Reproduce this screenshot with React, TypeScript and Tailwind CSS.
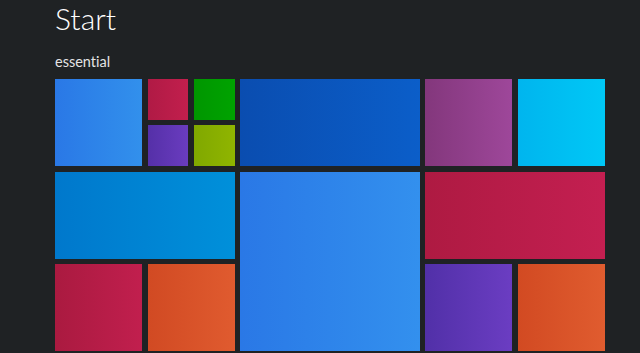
import React from "react";

type Tile = {
  pos: string;
  from: string;
  to: string;
};

// grid: 12 columns x 6 rows, each unit ~40.7px
const tiles: Tile[] = [
  { pos: "col-start-1 col-span-2 row-start-1 row-span-2", from: "from-[#2a78e6]", to: "to-[#3290ec]" },
  { pos: "col-start-3 col-span-1 row-start-1 row-span-1", from: "from-[#b01a45]", to: "to-[#c21f4d]" },
  { pos: "col-start-4 col-span-1 row-start-1 row-span-1", from: "from-[#009600]", to: "to-[#00a300]" },
  { pos: "col-start-3 col-span-1 row-start-2 row-span-1", from: "from-[#5530a8]", to: "to-[#6a3cbf]" },
  { pos: "col-start-4 col-span-1 row-start-2 row-span-1", from: "from-[#80a800]", to: "to-[#90b500]" },
  { pos: "col-start-1 col-span-4 row-start-3 row-span-2", from: "from-[#0078cc]", to: "to-[#0090da]" },
  { pos: "col-start-1 col-span-2 row-start-5 row-span-2", from: "from-[#aa1a40]", to: "to-[#c11f4e]" },
  { pos: "col-start-3 col-span-2 row-start-5 row-span-2", from: "from-[#d14a23]", to: "to-[#e05b2f]" },
  { pos: "col-start-5 col-span-4 row-start-1 row-span-2", from: "from-[#0a4db0]", to: "to-[#0b5ec9]" },
  { pos: "col-start-5 col-span-4 row-start-3 row-span-4", from: "from-[#2a78e6]", to: "to-[#3390ee]" },
  { pos: "col-start-9 col-span-2 row-start-1 row-span-2", from: "from-[#83377c]", to: "to-[#9e479a]" },
  { pos: "col-start-11 col-span-2 row-start-1 row-span-2", from: "from-[#00b5ee]", to: "to-[#00c8f6]" },
  { pos: "col-start-9 col-span-4 row-start-3 row-span-2", from: "from-[#ae1a42]", to: "to-[#c41f51]" },
  { pos: "col-start-9 col-span-2 row-start-5 row-span-2", from: "from-[#5130a8]", to: "to-[#6b3dc2]" },
  { pos: "col-start-11 col-span-2 row-start-5 row-span-2", from: "from-[#d24a22]", to: "to-[#e05c2f]" },
];

export default function App() {
  return (
    <div className="w-[640px] h-[353px] overflow-hidden bg-[#1f2224] pl-[55px] font-['Lato',sans-serif] [font-variant-ligatures:none]">
      <h1 className="pt-[3px] text-[30px] leading-[30px] font-light text-white">Start</h1>
      <div className="mt-[19px] text-[14.5px] leading-[20px] text-[#e4e4e4]">essential</div>
      <div className="mt-[7px] grid grid-cols-[repeat(12,40.7px)] grid-rows-[repeat(6,40.7px)] gap-[5.6px]">
        {tiles.map((t, i) => (
          <div key={i} className={`${t.pos} bg-linear-to-r ${t.from} ${t.to}`} />
        ))}
      </div>
    </div>
  );
}
